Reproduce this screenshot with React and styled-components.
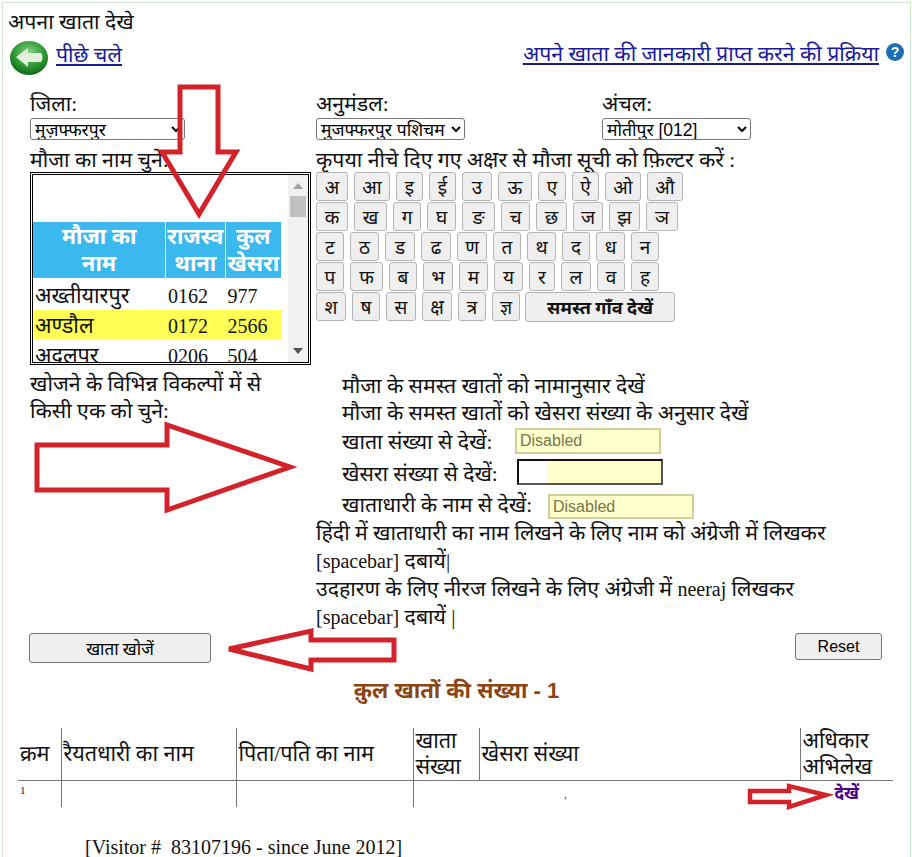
import React from 'react';
import styled, { createGlobalStyle } from 'styled-components';

const consonants = [
  [['अ', 32], ['आ', 36], ['इ', 27], ['ई', 27], ['उ', 30], ['ऊ', 34], ['ए', 28], ['ऐ', 27], ['ओ', 36], ['औ', 36]],
  [['क', 32], ['ख', 33], ['ग', 28], ['घ', 29], ['ङ', 33], ['च', 29], ['छ', 31], ['ज', 30], ['झ', 31], ['ञ', 32]],
  [['ट', 28], ['ठ', 29], ['ड', 30], ['ढ', 30], ['ण', 30], ['त', 28], ['थ', 29], ['द', 28], ['ध', 29], ['न', 28]],
  [['प', 28], ['फ', 33], ['ब', 28], ['भ', 30], ['म', 29], ['य', 29], ['र', 26], ['ल', 30], ['व', 28], ['ह', 28]],
  [['श', 30], ['ष', 28], ['स', 30], ['क्ष', 30], ['त्र', 28], ['ज्ञ', 28]],
];

const mouzas = [
  { name: 'अख्तीयारपुर', thana: '0162', khesra: '977', height: 32 },
  { name: 'अण्डौल', thana: '0172', khesra: '2566', height: 29, active: true },
  { name: 'अदलपुर', thana: '0206', khesra: '504', height: 31 },
];

const App = () => {
  return (
    <Page>
      <GlobalStyle />
      <Frame>
        <Title>अपना खाता देखे</Title>
        <BackRow>
          <BackLink href="#">
            <svg width="38" height="34" viewBox="0 0 38 34">
              <defs>
                <radialGradient id="ball" cx="50%" cy="35%" r="70%">
                  <stop offset="0%" stopColor="#8fd18a" />
                  <stop offset="55%" stopColor="#2f9a35" />
                  <stop offset="100%" stopColor="#0d5f18" />
                </radialGradient>
              </defs>
              <ellipse cx="19" cy="17" rx="19" ry="17" fill="url(#ball)" />
              <path d="M6 16 L18 7 L18 12 L31 12 Q34 16 31 21 L18 21 L18 26 Z" fill="#e4efe0" />
            </svg>
            <u>पीछे चले</u>
          </BackLink>
          <HelpGroup>
            <a href="#">अपने खाता की जानकारी प्राप्त करने की प्रक्रिया</a>
            <svg width="18" height="18" viewBox="0 0 18 18">
              <circle cx="9" cy="9" r="9" fill="#1c6fb5" />
              <text x="9" y="14" textAnchor="middle" fontSize="14" fontWeight="700" fontFamily="Liberation Sans" fill="#fff">?</text>
            </svg>
          </HelpGroup>
        </BackRow>

        <FilterGrid>
          <Field>
            <FieldLabel>जिला:</FieldLabel>
            <Select $w={155} defaultValue="a">
              <option value="a">मुज़फ्फरपुर</option>
            </Select>
          </Field>
          <Field>
            <FieldLabel>अनुमंडल:</FieldLabel>
            <Select $w={149} defaultValue="a">
              <option value="a">मुजफ्फरपुर पशिचम</option>
            </Select>
          </Field>
          <Field>
            <FieldLabel>अंचल:</FieldLabel>
            <Select $w={149} defaultValue="a">
              <option value="a">मोतीपुर [012]</option>
            </Select>
          </Field>
        </FilterGrid>

        <PickerRow>
          <div>
            <FieldLabel>मौजा का नाम चुने:</FieldLabel>
            <ListBox>
              <ListScroll>
                <MouzaTable>
                  <thead>
                    <tr>
                      <MouzaHead $w={131}>मौजा का<br />नाम</MouzaHead>
                      <MouzaHead $w={58}>राजस्व<br />थाना</MouzaHead>
                      <MouzaHead $w={55}>कुल<br />खेसरा</MouzaHead>
                    </tr>
                  </thead>
                  <tbody>
                    {mouzas.map((m) => (
                      <MouzaRow key={m.name} $active={m.active} $h={m.height}>
                        <MouzaName>{m.name}</MouzaName>
                        <td>{m.thana}</td>
                        <td>{m.khesra}</td>
                      </MouzaRow>
                    ))}
                  </tbody>
                </MouzaTable>
              </ListScroll>
              <ScrollTrack>
                <ArrowUp />
                <Thumb />
                <ArrowDown />
              </ScrollTrack>
            </ListBox>
          </div>
          <div>
            <FieldLabel>कृपया नीचे दिए गए अक्षर से मौजा सूची को फ़िल्टर करें :</FieldLabel>
            <Keyboard>
              {consonants.map((row, i) => (
                <KeyRow key={i}>
                  {row.map(([letter, width]) => (
                    <KeyButton key={letter} $w={width}>{letter}</KeyButton>
                  ))}
                  {i === 4 && <AllButton>समस्त गाँव देखें</AllButton>}
                </KeyRow>
              ))}
            </Keyboard>
          </div>
        </PickerRow>

        <SearchRow>
          <SearchIntro>
            खोजने के विभिन्न विकल्पों में से
            <br />
            किसी एक को चुने:
          </SearchIntro>
          <Options>
            <OptionLine $h={27}>मौजा के समस्त खातों को नामानुसार देखें</OptionLine>
            <OptionLine $h={27}>मौजा के समस्त खातों को खेसरा संख्या के अनुसार देखें</OptionLine>
            <OptionLine $h={31}>
              <OptionText $w={173}>खाता संख्या से देखें:</OptionText>
              <Input readOnly value="Disabled" />
            </OptionLine>
            <OptionLine $h={32}>
              <OptionText $w={175}>खेसरा संख्या से देखें:</OptionText>
              <FocusInput />
            </OptionLine>
            <OptionLine $h={31}>
              <OptionText $w={206}>खाताधारी के नाम से देखें:</OptionText>
              <LowInput readOnly value="Disabled" />
            </OptionLine>
          </Options>
        </SearchRow>

        <Note>
          हिंदी में खाताधारी का नाम लिखने के लिए नाम को अंग्रेजी में लिखकर
          <br />
          <Latin>[spacebar]</Latin> दबायें|
          <br />
          उदहारण के लिए नीरज लिखने के लिए अंग्रेजी में <Latin>neeraj</Latin> लिखकर
          <br />
          <Latin>[spacebar]</Latin> दबायें |
        </Note>

        <ActionRow>
          <SearchButton>खाता खोजें</SearchButton>
          <ResetButton>Reset</ResetButton>
        </ActionRow>

        <Total>क़ुल खातों की संख्या - 1</Total>

        <ResultTable>
          <thead>
            <tr>
              <ResultHead $w={43}>क्रम</ResultHead>
              <ResultHead $w={175} $line>रैयतधारी का नाम</ResultHead>
              <ResultHead $w={177} $line>पिता/पति का नाम</ResultHead>
              <ResultHead $w={66} $line>खाता संख्या</ResultHead>
              <ResultHead $w={321} $line>खेसरा संख्या</ResultHead>
              <ResultHead $w={93} $line>अधिकार अभिलेख</ResultHead>
            </tr>
          </thead>
          <tbody>
            <tr>
              <ResultCell>1</ResultCell>
              <ResultCell $line />
              <ResultCell $line />
              <ResultCell $line />
              <KhesraCell>,</KhesraCell>
              <ViewCell><ViewLink href="#">देखें</ViewLink></ViewCell>
            </tr>
          </tbody>
        </ResultTable>

        <Visitor>[Visitor #&nbsp; 83107196 - since June 2012]</Visitor>
      </Frame>

      <Overlay width="912" height="857" viewBox="0 0 912 857">
        <g fill="none" stroke="#d2232a" strokeWidth="5" strokeLinejoin="miter">
          <path d="M180 87 H218 V152 H236 L199 214 L162 152 H180 Z" />
          <path d="M37 445 H167 V425 L290 467 L167 510 V490 H37 Z" />
          <path d="M394 640 H311 V631 L229 649 L311 669 V660 H394 Z" />
          <path d="M750 791 H789 V786 L826 795 L789 807 V802 H750 Z" strokeWidth="4.5" />
        </g>
      </Overlay>
    </Page>
  );
};

export default App;

const GlobalStyle = createGlobalStyle`
  html, body {
    margin: 0;
    padding: 0;
    background: #fff;
  }
  body {
    font-family: "Liberation Serif", "Noto Sans", serif;
    color: #111;
    overflow: hidden;
  }
`;

const Page = styled.div`
  position: relative;
  width: 912px;
  height: 857px;
  overflow: hidden;
`;

const Frame = styled.div`
  margin: 2px 1px 0 2px;
  height: 855px;
  padding-top: 4px;
  box-sizing: border-box;
  border: 1px solid #cde8cd;
  border-bottom: none;
`;

const Overlay = styled.svg`
  position: absolute;
  left: 0;
  top: 0;
  pointer-events: none;
`;

const Title = styled.div`
  height: 30px;
  line-height: 30px;
  padding-left: 5px;
  font-size: 21.3px;
`;

const BackRow = styled.div`
  display: flex;
  justify-content: space-between;
  align-items: center;
  height: 40px;
  margin-top: 1px;
  padding: 0 6px 0 7px;

  a {
    color: #1a1a9c;
    font-size: 21.3px;
  }
`;

const BackLink = styled.a`
  display: flex;
  align-items: center;
  gap: 8px;

  u {
    margin-top: -9px;
  }
`;

const HelpGroup = styled.div`
  display: flex;
  align-items: center;
  gap: 7px;
  margin-top: -12px;
`;

const FilterGrid = styled.div`
  display: grid;
  grid-template-columns: 286px 286px 286px;
  margin-top: 14px;
  padding-left: 27px;
`;

const Field = styled.div`
  display: flex;
  flex-direction: column;
  align-items: flex-start;
`;

const FieldLabel = styled.div`
  height: 24px;
  line-height: 24px;
  font-size: 21.3px;
  white-space: nowrap;
`;

const Select = styled.select`
  width: ${(p) => p.$w}px;
  height: 22px;
  margin-top: 2px;
  padding: 0;
  font-family: "Liberation Sans", "Noto Sans", sans-serif;
  font-size: 17.5px;
  background: #fff;
  border: 1px solid #767676;
  border-radius: 3px;
`;

const PickerRow = styled.div`
  display: grid;
  grid-template-columns: 286px 1fr;
  margin-top: 8px;
  padding-left: 27px;
`;

const ListBox = styled.div`
  display: flex;
  justify-content: space-between;
  box-sizing: border-box;
  width: 281px;
  height: 193px;
  border: 3px double #000;
  background: #fff;
`;

const ListScroll = styled.div`
  flex: 1;
  overflow: hidden;
  padding-top: 47px;
`;

const MouzaTable = styled.table`
  width: 250px;
  margin-left: -1px;
  border-collapse: separate;
  border-spacing: 1px 0;
  table-layout: fixed;
  font-size: 20px;
`;

const MouzaHead = styled.th`
  width: ${(p) => p.$w}px;
  height: 56px;
  padding: 0;
  background: #3bb8ee;
  color: #fff;
  line-height: 27px;
  font-size: 22px;
`;

const MouzaRow = styled.tr`
  background: ${(p) => (p.$active ? '#ffff55' : '#fff')};

  td {
    height: ${(p) => p.$h}px;
    padding: 3px 2px 0;
    line-height: 26px;
    box-sizing: border-box;
    white-space: nowrap;
  }
`;

const MouzaName = styled.td`
  font-size: 21.6px;
`;

const ScrollTrack = styled.div`
  position: relative;
  flex: none;
  width: 20px;
  height: 100%;
  background: #f1f1f1;
`;

const Thumb = styled.div`
  position: absolute;
  top: 21px;
  left: 2px;
  width: 16px;
  height: 21px;
  background: #c1c1c1;
`;

const ArrowUp = styled.div`
  position: absolute;
  top: 8px;
  left: 5px;
  border: 5px solid transparent;
  border-top: none;
  border-bottom: 6px solid #a3a3a3;
`;

const ArrowDown = styled.div`
  position: absolute;
  bottom: 8px;
  left: 5px;
  border: 5px solid transparent;
  border-bottom: none;
  border-top: 6px solid #505050;
`;

const Keyboard = styled.div`
  display: flex;
  flex-direction: column;
  gap: 1px;
`;

const KeyRow = styled.div`
  display: flex;
  gap: 6px;
`;

const KeyButton = styled.button`
  box-sizing: border-box;
  width: ${(p) => p.$w}px;
  height: 29px;
  padding: 0;
  font-family: "Liberation Serif", "Noto Sans", serif;
  font-size: 19px;
  color: #111;
  background: #efefef;
  border: 1px solid #b4b4b4;
  border-radius: 3px;
`;

const AllButton = styled(KeyButton)`
  width: 150px;
  height: 30px;
  margin-left: -1px;
  font-weight: 700;
  font-size: 18px;
`;

const SearchRow = styled.div`
  display: grid;
  grid-template-columns: 312px 1fr;
  margin-top: 6px;
  padding-left: 27px;
  font-size: 21.3px;
`;

const SearchIntro = styled.div`
  line-height: 27px;
`;

const Options = styled.div`
  display: flex;
  flex-direction: column;
`;

const OptionLine = styled.div`
  display: flex;
  align-items: center;
  height: ${(p) => p.$h}px;
  white-space: nowrap;
`;

const OptionText = styled.span`
  flex: none;
  width: ${(p) => p.$w}px;
`;

const Input = styled.input`
  box-sizing: border-box;
  width: 146px;
  height: 26px;
  padding: 0 3px;
  font-family: "Liberation Sans", sans-serif;
  font-size: 16px;
  color: #77774d;
  background: #ffffcc;
  border: 2px solid #cfcf9c;
  outline: none;
`;

const FocusInput = styled(Input)`
  background: linear-gradient(90deg, #fff 28px, #ffffcc 28px);
  border-color: #111 #555 #555 #111;
`;

const LowInput = styled(Input)`
  height: 25px;
  margin-top: 6px;
`;

const Note = styled.div`
  margin-left: 313px;
  line-height: 28px;
  font-size: 21.3px;
  white-space: nowrap;
`;

const Latin = styled.span`
  font-size: 20px;
`;

const ActionRow = styled.div`
  display: flex;
  justify-content: space-between;
  align-items: flex-start;
  margin-top: 2px;
  padding: 0 28px 0 26px;
`;

const SearchButton = styled.button`
  width: 182px;
  height: 30px;
  padding: 0;
  font-family: "Liberation Serif", "Noto Sans", serif;
  font-size: 17px;
  background: #efefef;
  border: 1px solid #767676;
  border-radius: 3px;
`;

const ResetButton = styled.button`
  width: 87px;
  height: 27px;
  padding: 0;
  font-family: "Liberation Sans", sans-serif;
  font-size: 16px;
  background: #efefef;
  border: 1px solid #767676;
  border-radius: 3px;
`;

const Total = styled.h2`
  height: 30px;
  margin: 13px 0 0;
  line-height: 30px;
  text-align: center;
  font-family: "Liberation Sans", "Noto Sans", sans-serif;
  font-size: 22px;
  font-weight: 700;
  color: #8b4513;
`;

const ResultTable = styled.table`
  width: 875px;
  margin: 22px 0 0 15px;
  border-collapse: collapse;
  table-layout: fixed;
`;

const ResultHead = styled.th`
  width: ${(p) => p.$w}px;
  height: 52px;
  padding: 0 2px;
  box-sizing: border-box;
  text-align: left;
  font-weight: 400;
  font-size: 21.6px;
  line-height: 26px;
  border-bottom: 1px solid #777;
  border-left: ${(p) => (p.$line ? '1px solid #777' : 'none')};
`;

const ResultCell = styled.td`
  height: 26px;
  padding: 2px 2px 0;
  box-sizing: border-box;
  vertical-align: top;
  font-size: 11px;
  line-height: 14px;
  border-left: ${(p) => (p.$line ? '1px solid #777' : 'none')};
`;

const KhesraCell = styled(ResultCell)`
  padding: 6px 0 0 85px;
`;

const ViewCell = styled(ResultCell)`
  text-align: right;
`;

const ViewLink = styled.a`
  display: inline-block;
  margin-right: 32px;
  color: #4b0082;
  font-size: 17px;
  line-height: 22px;
  font-weight: 700;
  text-decoration: none;
`;

const Visitor = styled.div`
  margin: 28px 0 0 82px;
  line-height: 24px;
  font-size: 20px;
`;
